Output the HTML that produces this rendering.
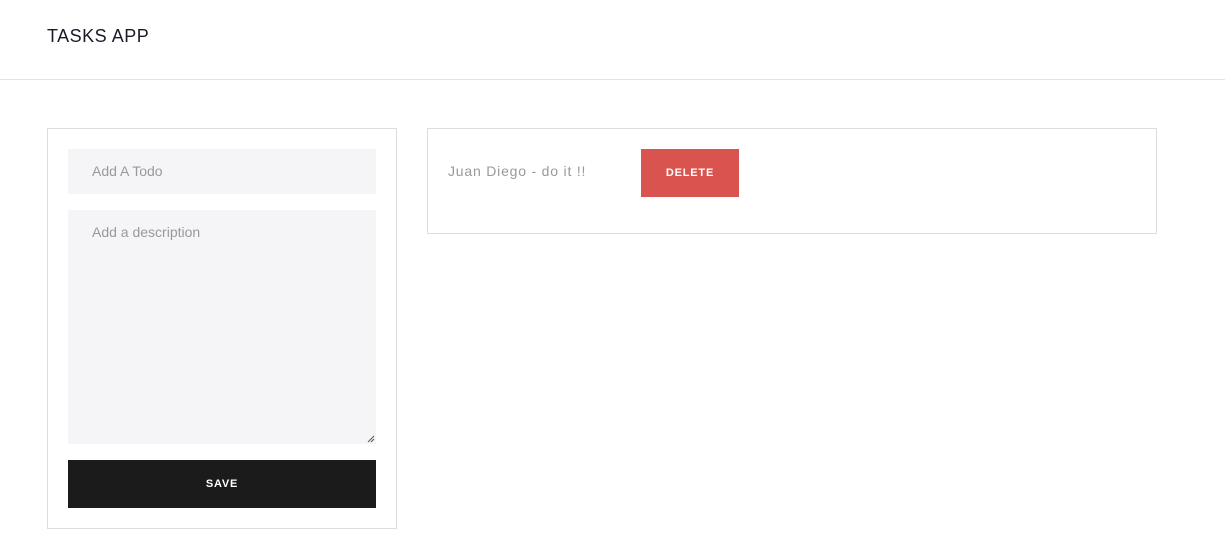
<!DOCTYPE html>
<html><head><style>
*{margin:0;padding:0;box-sizing:border-box}
body{width:1225px;height:542px;background:#fff;font-family:"Liberation Sans",sans-serif;position:relative;overflow:hidden}
.hdr{position:absolute;left:0;top:0;width:1225px;height:80px;border-bottom:1px solid #e3e3e3}
.title{position:absolute;left:47px;top:26px;font-size:18px;color:#1a1a2a;letter-spacing:0.5px}
.box{position:absolute;border:1px solid #dddddd}
.in{position:absolute;background:#f5f5f7;color:#999;font-size:14px;padding-left:24px}
.btn{position:absolute;color:#fff;font-size:11px;font-weight:bold;letter-spacing:0.8px;display:flex;align-items:center;justify-content:center}
</style></head><body>
<div class="hdr"><div class="title">TASKS APP</div></div>
<div class="box" style="left:47px;top:128px;width:350px;height:401px"></div>
<div class="in" style="left:68px;top:149px;width:308px;height:45px;line-height:45px">Add A Todo</div>
<div class="in" style="left:68px;top:210px;width:308px;height:234px;padding-top:14px">Add a description
<svg style="position:absolute;right:1px;bottom:1px" width="8" height="8"><path d="M1 7L7 1M4 7L7 4" stroke="#555" stroke-width="1"/></svg></div>
<div class="btn" style="left:68px;top:460px;width:308px;height:48px;background:#1b1b1b">SAVE</div>
<div class="box" style="left:427px;top:128px;width:730px;height:106px"></div>
<div style="position:absolute;left:448px;top:163px;font-size:14px;color:#999;letter-spacing:0.8px">Juan Diego - do it !!</div>
<div class="btn" style="left:641px;top:149px;width:98px;height:48px;background:#d9534f">DELETE</div>
</body></html>
